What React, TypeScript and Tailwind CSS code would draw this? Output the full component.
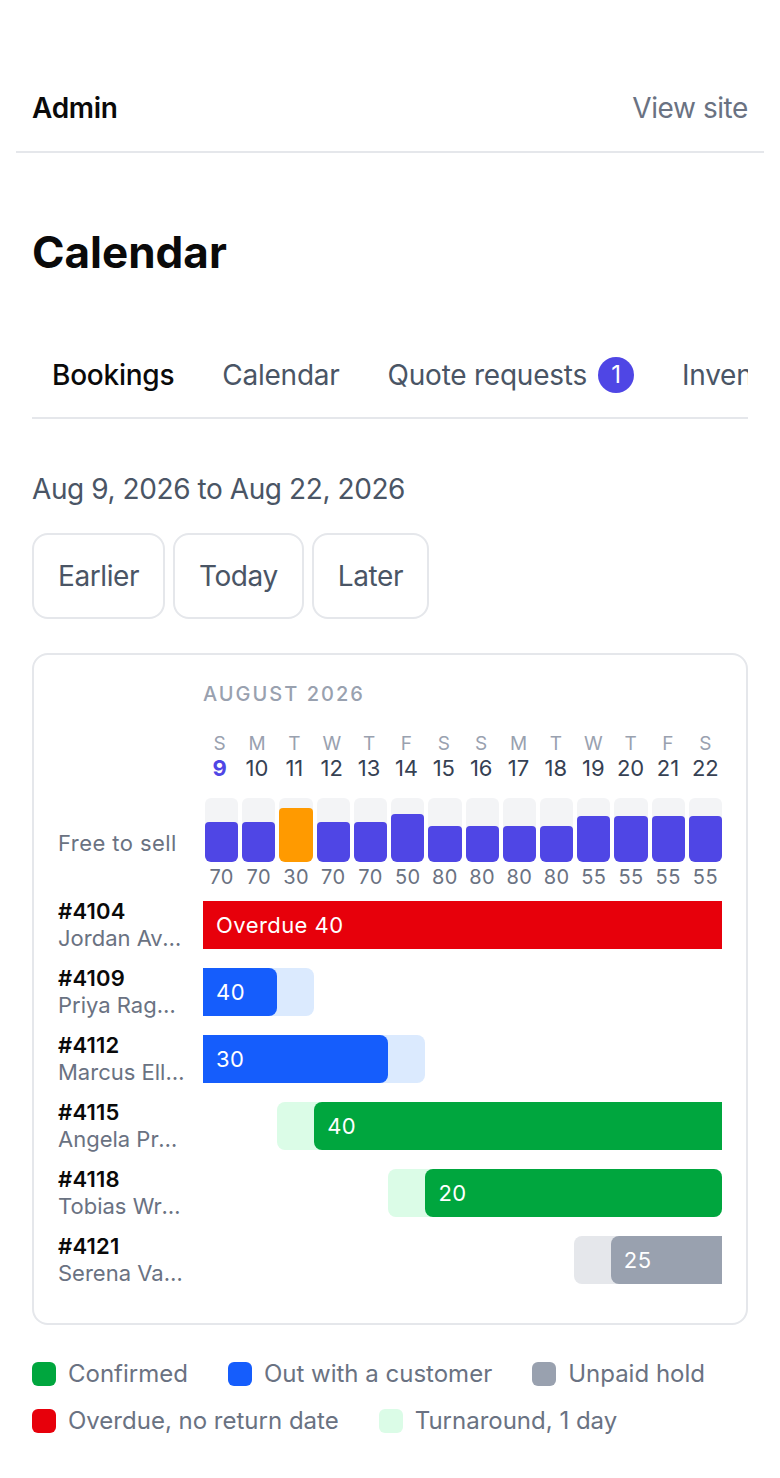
import React from "react";

const days = [
  { l: "S", n: 9, free: 70, fill: 40 },
  { l: "M", n: 10, free: 70, fill: 40 },
  { l: "T", n: 11, free: 30, fill: 54, low: true },
  { l: "W", n: 12, free: 70, fill: 40 },
  { l: "T", n: 13, free: 70, fill: 40 },
  { l: "F", n: 14, free: 50, fill: 48 },
  { l: "S", n: 15, free: 80, fill: 36 },
  { l: "S", n: 16, free: 80, fill: 36 },
  { l: "M", n: 17, free: 80, fill: 36 },
  { l: "T", n: 18, free: 80, fill: 36 },
  { l: "W", n: 19, free: 55, fill: 46 },
  { l: "T", n: 20, free: 55, fill: 46 },
  { l: "F", n: 21, free: 55, fill: 46 },
  { l: "S", n: 22, free: 55, fill: 46 },
];

function Label({ id, name }: { id: string; name: string }) {
  return (
    <div className="w-[128px] min-w-0">
      <div className="text-[22px] leading-[26.5px] font-semibold text-[#0a0a0a] tracking-[0.01em]">{id}</div>
      <div className="text-[22px] leading-[26.5px] text-gray-500 truncate">{name}</div>
    </div>
  );
}

const barText = "text-[22px] leading-[26px] text-white tracking-[0.02em] pl-[13px] flex items-center";

export default function App() {
  return (
    <div className="min-h-screen bg-white font-[Inter,sans-serif] pt-[64px] pb-[40px] text-[#0a0a0a]">
      <header className="mx-[16px] px-[16px] h-[89px] flex items-center justify-between border-b-2 border-gray-200">
        <span className="text-[28px] leading-[40px] font-semibold text-[#0a0a0a] tracking-[-0.01em]">Admin</span>
        <span className="text-[28px] leading-[40px] text-gray-500 tracking-[-0.015em]">View site</span>
      </header>

      <main className="px-[32px]">
        <h1 className="mt-[73px] text-[44px] leading-[52px] font-bold text-[#0a0a0a]">Calendar</h1>

        <nav className="mt-[55px] border-b-2 border-gray-200 overflow-hidden">
          <div className="flex whitespace-nowrap gap-[8px] tracking-[-0.015em]">
            <span className="px-[20px] py-[22px] text-[28px] leading-[40px] font-medium text-[#0a0a0a]">Bookings</span>
            <span className="px-[20px] py-[22px] text-[28px] leading-[40px] text-gray-600">Calendar</span>
            <span className="px-[20px] py-[22px] text-[28px] leading-[40px] text-gray-600 flex items-center gap-[11px]">
              Quote requests
              <span className="w-[36px] h-[36px] rounded-full bg-[#4f46e5] text-white text-[24px] leading-[36px] flex items-center justify-center">1</span>
            </span>
            <span className="px-[20px] py-[22px] text-[28px] leading-[40px] text-gray-600">Inventory</span>
          </div>
        </nav>

        <p className="mt-[50px] text-[28px] leading-[40px] text-gray-600 tracking-[-0.015em]">Aug 9, 2026 to Aug 22, 2026</p>

        <div className="mt-[24px] flex gap-[8px]">
          {["Earlier", "Today", "Later"].map((t) => (
            <button
              key={t}
              className="px-[24px] py-[21px] text-[28px] leading-[40px] text-gray-600 tracking-[-0.015em] border-2 border-gray-200 rounded-[16px] bg-white"
            >
              {t}
            </button>
          ))}
        </div>

        <section className="mt-[34px] border-2 border-gray-200 rounded-[16px] px-[24px] pt-[24px] pb-[37px]">
          <div className="grid grid-cols-[128px_1fr] gap-x-[17px]">
            <div />
            <div className="text-[20px] leading-[30px] tracking-[0.1em] text-gray-400 font-medium">AUGUST 2026</div>

            <div />
            <div className="mt-[23px] grid grid-cols-14 gap-x-[4px]">
              {days.map((d, i) => (
                <div key={i} className="flex flex-col items-center">
                  <span className="text-[19px] leading-[24px] text-gray-400">{d.l}</span>
                  <span
                    className={
                      d.n === 9
                        ? "text-[22px] leading-[24px] font-bold text-[#4f46e5]"
                        : "text-[22px] leading-[24px] text-gray-700"
                    }
                  >
                    {d.n}
                  </span>
                </div>
              ))}
            </div>

            <div className="mt-[18px] self-center text-[22px] leading-[28px] text-gray-500 tracking-[0.02em]">Free to sell</div>
            <div className="mt-[18px] pl-[2px]">
              <div className="grid grid-cols-14 gap-x-[4px]">
                {days.map((d, i) => (
                  <div key={i} className="h-[64px] rounded-[6px] bg-gray-100 flex flex-col justify-end overflow-hidden">
                    <div
                      className={d.low ? "bg-[#ff9a00] rounded-[4px]" : "bg-[#4f46e5] rounded-[4px]"}
                      style={{ height: d.fill }}
                    />
                  </div>
                ))}
              </div>
              <div className="mt-[4px] grid grid-cols-14 gap-x-[4px]">
                {days.map((d, i) => (
                  <div key={i} className="text-center text-[20px] leading-[22px] text-gray-500 tracking-[0.02em]">
                    {d.free}
                  </div>
                ))}
              </div>
            </div>
          </div>

          <div className="mt-[10px] flex flex-col gap-[14px]">
            <div className="flex items-center gap-[17px]">
              <Label id="#4104" name="Jordan Avery" />
              <div className="flex-1 grid grid-cols-14 h-[48px]">
                <div className={`col-start-1 col-span-14 row-start-1 bg-red-600 ${barText}`}>Overdue 40</div>
              </div>
            </div>

            <div className="flex items-center gap-[17px]">
              <Label id="#4109" name="Priya Ragwani" />
              <div className="flex-1 grid grid-cols-14 h-[48px]">
                <div className="col-start-1 col-span-3 row-start-1 bg-blue-100 rounded-r-[8px]" />
                <div className={`col-start-1 col-span-2 row-start-1 bg-blue-600 rounded-r-[8px] ${barText}`}>40</div>
              </div>
            </div>

            <div className="flex items-center gap-[17px]">
              <Label id="#4112" name="Marcus Ellwood" />
              <div className="flex-1 grid grid-cols-14 h-[48px]">
                <div className="col-start-1 col-span-6 row-start-1 bg-blue-100 rounded-r-[8px]" />
                <div className={`col-start-1 col-span-5 row-start-1 bg-blue-600 rounded-r-[8px] ${barText}`}>30</div>
              </div>
            </div>

            <div className="flex items-center gap-[17px]">
              <Label id="#4115" name="Angela Prescott" />
              <div className="flex-1 grid grid-cols-14 h-[48px]">
                <div className="col-start-3 col-span-12 row-start-1 bg-green-100 rounded-l-[8px]" />
                <div className={`col-start-4 col-span-11 row-start-1 bg-green-600 rounded-l-[8px] ${barText}`}>40</div>
              </div>
            </div>

            <div className="flex items-center gap-[17px]">
              <Label id="#4118" name="Tobias Wrenford" />
              <div className="flex-1 grid grid-cols-14 h-[48px]">
                <div className="col-start-6 col-span-9 row-start-1 bg-green-100 rounded-[8px]" />
                <div className={`col-start-7 col-span-8 row-start-1 bg-green-600 rounded-[8px] ${barText}`}>20</div>
              </div>
            </div>

            <div className="flex items-center gap-[17px]">
              <Label id="#4121" name="Serena Vasquez" />
              <div className="flex-1 grid grid-cols-14 h-[48px]">
                <div className="col-start-11 col-span-4 row-start-1 bg-gray-200 rounded-l-[8px]" />
                <div className={`col-start-12 col-span-3 row-start-1 bg-gray-400 rounded-l-[8px] ${barText}`}>25</div>
              </div>
            </div>
          </div>
        </section>

        <div className="mt-[33px] flex flex-wrap gap-x-[40px] gap-y-[15px]">
          {[
            ["bg-green-600", "Confirmed"],
            ["bg-blue-600", "Out with a customer"],
            ["bg-gray-400", "Unpaid hold"],
            ["bg-red-600", "Overdue, no return date"],
            ["bg-green-100", "Turnaround, 1 day"],
          ].map(([c, t]) => (
            <div key={t} className="flex items-center gap-[12px] h-[32px]">
              <span className={`w-[24px] h-[24px] rounded-[6px] ${c}`} />
              <span className="text-[24px] leading-[32px] text-gray-500">{t}</span>
            </div>
          ))}
        </div>
      </main>
    </div>
  );
}
